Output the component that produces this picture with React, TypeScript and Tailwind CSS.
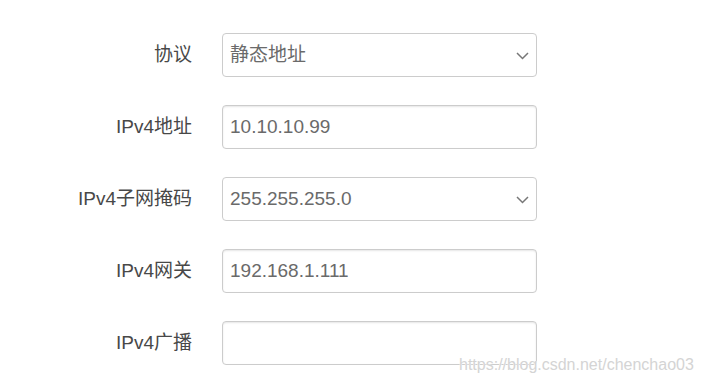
const rows: { label: string; value: string; select?: boolean }[] = [
  { label: '协议', value: '静态地址', select: true },
  { label: 'IPv4地址', value: '10.10.10.99' },
  { label: 'IPv4子网掩码', value: '255.255.255.0', select: true },
  { label: 'IPv4网关', value: '192.168.1.111' },
  { label: 'IPv4广播', value: '' },
];

function Chevron() {
  return (
    <svg className="w-[13px] h-[8px] mt-[2px]" viewBox="0 0 13 8" fill="none" stroke="#777" strokeWidth={1.5}>
      <path d="M1 1l5.5 5.5L12 1" />
    </svg>
  );
}

export default function App() {
  return (
    <div
      className="relative w-[702px] h-[383px] bg-white overflow-hidden"
      style={{ fontFamily: '"Liberation Sans", Arial, "Noto Sans CJK SC", sans-serif' }}
    >
      <div className="grid grid-cols-[192px_315px] gap-x-[30px] gap-y-[28px] pt-[33px]">
        {rows.map((r) => (
          <div key={r.label} className="contents">
            <div className="flex items-center justify-end h-[44px] text-[19px] text-[#484848]">{r.label}</div>
            {r.select ? (
              <div className="flex items-center justify-between h-[44px] pl-[7px] pr-[7px] border border-[#ccc] rounded-[4px] bg-white text-[19px] text-[#6a6a6a]">
                <span>{r.value}</span>
                <Chevron />
              </div>
            ) : (
              <div className="flex items-center h-[44px] pl-[7px] border border-[#ccc] rounded-[4px] bg-white text-[19px] text-[#6a6a6a] shadow-[inset_0_1px_2px_rgba(0,0,0,0.1)]">
                <span>{r.value}</span>
              </div>
            )}
          </div>
        ))}
      </div>
      <div
        className="absolute left-[459px] top-[353px] text-[16px] text-[#d4d4d4]"
        style={{ textShadow: '0 0 1px #fff, 0 0 1px #fff' }}
      >
        https://blog.csdn.net/chenchao03
      </div>
    </div>
  );
}
